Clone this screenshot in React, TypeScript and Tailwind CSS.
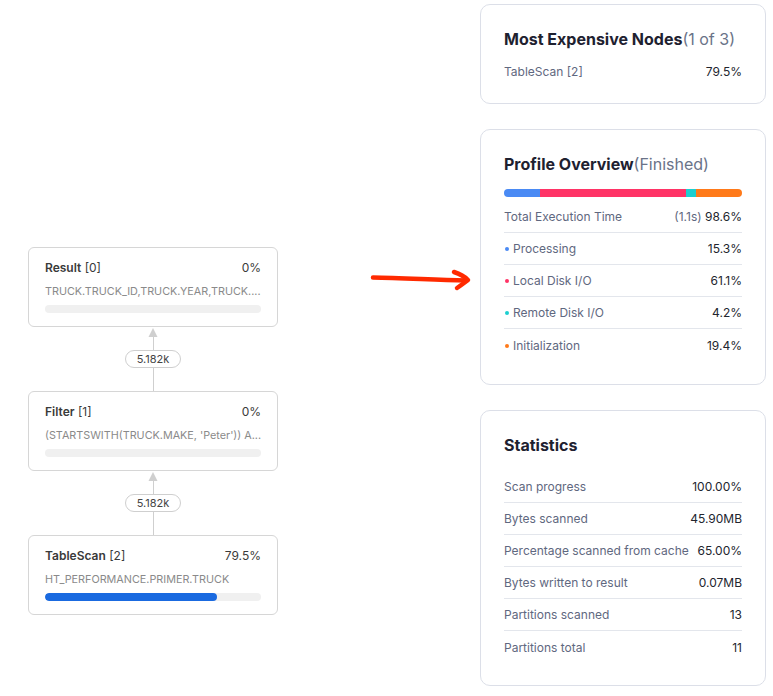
import React from "react";

const font = { fontFamily: "Inter, 'Noto Sans', sans-serif" };

function Node({ name, idx, pct, sub, fill }: { name: string; idx: string; pct: string; sub: string; fill: number }) {
  return (
    <div className="w-[250px] h-[80px] rounded-[6px] border border-[#d6d6d6] bg-white px-4 pt-[12px]">
      <div className="flex justify-between text-[12px] leading-[16px] text-[#3a3a3a]">
        <span>
          <span className="font-semibold">{name}</span> <span>{idx}</span>
        </span>
        <span>{pct}</span>
      </div>
      <div className="mt-[8px] text-[10.8px] leading-[16px] text-[#8a8a8a] whitespace-nowrap">{sub}</div>
      <div className="mt-[5px] h-[8px] rounded-full bg-[#f0f0f0] overflow-hidden">
        {fill > 0 && <div className="h-full rounded-full bg-[#1a6ae0]" style={{ width: `${fill}%` }} />}
      </div>
    </div>
  );
}

function Connector() {
  return (
    <div className="w-[250px] h-[64px] flex flex-col items-center">
      <svg width="10" height="9" viewBox="0 0 10 9" className="mt-[1px]">
        <polygon points="5,0 9.5,9 0.5,9" fill="#cfcfcf" />
      </svg>
      <div className="w-px h-[13px] bg-[#cfcfcf]" />
      <div className="h-[18px] px-[11px] rounded-full border border-[#cfcfcf] bg-white text-[11px] leading-[16px] text-[#444] flex items-center">5.182k</div>
      <div className="w-px flex-1 bg-[#cfcfcf]" />
    </div>
  );
}

function Row({ label, value, dot, last }: { label: string; value: React.ReactNode; dot?: string; last?: boolean }) {
  return (
    <div className={`h-[32px] pt-[1px] flex items-center justify-between text-[12px] ${last ? "" : "border-b border-[#e3e6ec]"}`}>
      <span className="flex items-center text-[#5f6880]">
        {dot && <span className={`w-[4px] h-[4px] rounded-full mr-[4px] ml-[1px] ${dot}`} />}
        {label}
      </span>
      <span className="text-[#22252e]">{value}</span>
    </div>
  );
}

export default function App() {
  return (
    <div className="w-[773px] h-[696px] bg-white flex" style={font}>
      <div className="w-[278px] pl-[28px] pt-[247px] flex flex-col">
        <Node name="Result" idx="[0]" pct="0%" sub="TRUCK.TRUCK_ID,TRUCK.YEAR,TRUCK...." fill={0} />
        <Connector />
        <Node name="Filter" idx="[1]" pct="0%" sub="(STARTSWITH(TRUCK.MAKE, 'Peter')) A..." fill={0} />
        <Connector />
        <Node name="TableScan" idx="[2]" pct="79.5%" sub="HT_PERFORMANCE.PRIMER.TRUCK" fill={79.5} />
      </div>
      <div className="w-[202px] pt-[268px] pl-[92px]">
        <svg width="104" height="26" viewBox="0 0 104 26">
          <path d="M3 9.5 C 30 10, 60 11.5, 96 12.5" stroke="#ff2a00" strokeWidth="4.5" fill="none" strokeLinecap="round" />
          <path d="M84 4 C 90 6, 95 9, 98 12 C 94 15, 90 18, 87 20" stroke="#ff2a00" strokeWidth="4.5" fill="none" strokeLinecap="round" strokeLinejoin="round" />
        </svg>
      </div>
      <div className="w-[286px] pt-[4px] flex flex-col gap-[25px]">
        <div className="rounded-[10px] border border-[#dcdfe8] px-[23px] pt-[22px] pb-[23px]">
          <div className="text-[16px] leading-[24px] text-[#1e2130]">
            <span className="font-bold">Most Expensive Nodes</span>
            <span className="text-[#6a7388]">(1 of 3)</span>
          </div>
          <div className="mt-[13px] h-[16px] flex items-center justify-between text-[12px]">
            <span className="text-[#5f6880]">TableScan [2]</span>
            <span className="text-[#22252e]">79.5%</span>
          </div>
        </div>
        <div className="rounded-[10px] border border-[#dcdfe8] px-[23px] pt-[22px] pb-[23px]">
          <div className="text-[16px] leading-[24px] text-[#1e2130]">
            <span className="font-bold">Profile Overview</span>
            <span className="text-[#6a7388]">(Finished)</span>
          </div>
          <div className="mt-[13px] h-[8px] rounded-full overflow-hidden flex">
            <div className="h-full bg-[#4a8af4]" style={{ width: "15.3%" }} />
            <div className="h-full bg-[#ff3366]" style={{ width: "61.1%" }} />
            <div className="h-full bg-[#1ccfd0]" style={{ width: "4.2%" }} />
            <div className="h-full bg-[#ff7a1a]" style={{ width: "19.4%" }} />
          </div>
          <div className="mt-[4px]">
            <Row label="Total Execution Time" value={<><span className="text-[#5f6880]">(1.1s)</span> 98.6%</>} />
            <Row label="Processing" value="15.3%" dot="bg-[#4a8af4]" />
            <Row label="Local Disk I/O" value="61.1%" dot="bg-[#ff3366]" />
            <Row label="Remote Disk I/O" value="4.2%" dot="bg-[#1ccfd0]" />
            <Row label="Initialization" value="19.4%" dot="bg-[#ff7a1a]" last />
          </div>
        </div>
        <div className="rounded-[10px] border border-[#dcdfe8] px-[23px] pt-[22px] pb-[22px]">
          <div className="text-[16px] leading-[24px] text-[#1e2130] font-bold">Statistics</div>
          <div className="mt-[14px]">
            <Row label="Scan progress" value="100.00%" />
            <Row label="Bytes scanned" value="45.90MB" />
            <Row label="Percentage scanned from cache" value="65.00%" />
            <Row label="Bytes written to result" value="0.07MB" />
            <Row label="Partitions scanned" value="13" />
            <Row label="Partitions total" value="11" last />
          </div>
        </div>
      </div>
    </div>
  );
}
